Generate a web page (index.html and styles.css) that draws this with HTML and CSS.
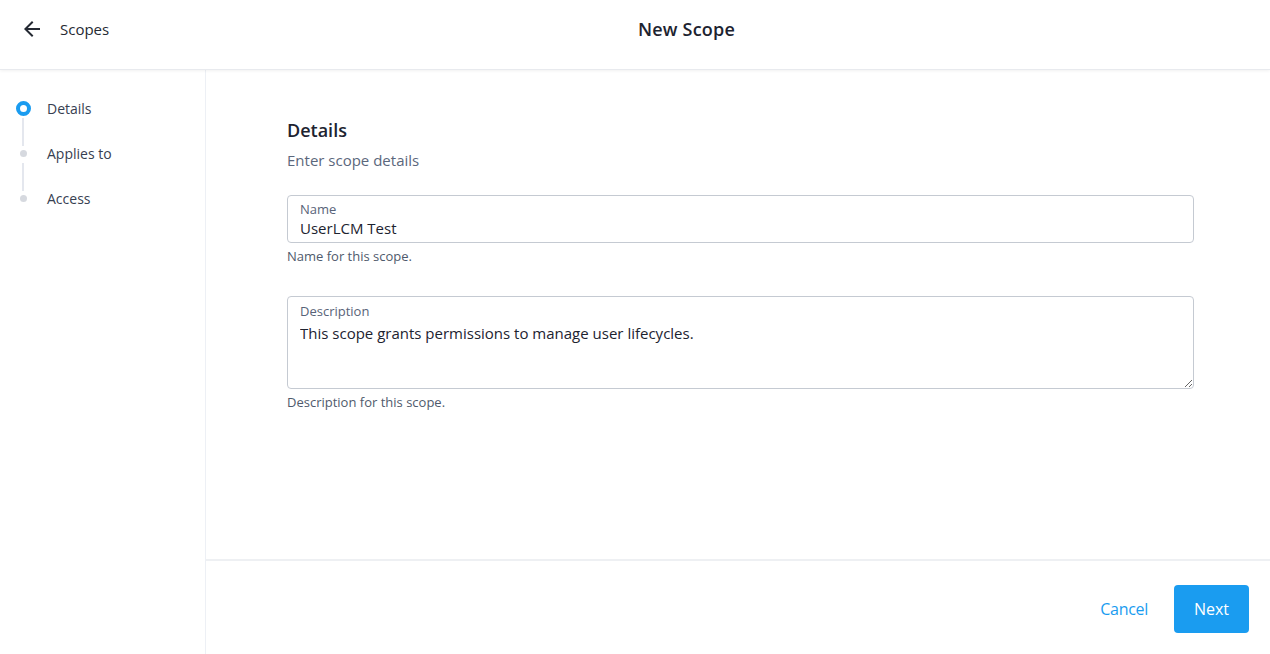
FILE: index.html
```html
<!DOCTYPE html>
<html lang="en">
<head>
  <meta charset="UTF-8" />
  <meta name="viewport" content="width=device-width, initial-scale=1.0"/>
  <title>New Scope</title>
  <link rel="stylesheet" href="styles.css">
</head>
<body>

  <header class="topbar">
    <a class="back" href="#">
      <svg width="24" height="24" viewBox="0 0 24 24"><path d="M20 11H7.83l5.59-5.59L12 4l-8 8 8 8 1.41-1.41L7.83 13H20v-2z" fill="currentColor"/></svg>
      <span>Scopes</span>
    </a>
    <h1 class="title">New Scope</h1>
  </header>

  <div class="layout">
    <!-- wizard steps -->
    <nav class="steps">
      <div class="step active"><span class="marker"></span><span class="step-label">Details</span></div>
      <div class="step"><span class="marker"></span><span class="step-label">Applies to</span></div>
      <div class="step"><span class="marker"></span><span class="step-label">Access</span></div>
    </nav>

    <main class="panel">
      <section class="content">
        <h2>Details</h2>
        <p class="subtitle">Enter scope details</p>

        <div class="field">
          <label for="name">Name</label>
          <input id="name" type="text" value="UserLCM Test" />
        </div>
        <p class="help">Name for this scope.</p>

        <div class="field multi">
          <label for="desc">Description</label>
          <textarea id="desc" rows="2">This scope grants permissions to manage user lifecycles.</textarea>
        </div>
        <p class="help">Description for this scope.</p>
      </section>

      <footer class="actions">
        <button class="btn-link" type="button">Cancel</button>
        <button class="btn-primary" type="button">Next</button>
      </footer>
    </main>
  </div>

</body>
</html>
```

FILE: styles.css
```css
*, *::before, *::after {
  box-sizing: border-box;
}

body {
  font-family: "Open Sans", Arial, sans-serif;
  margin: 0;
  height: 100vh;
  display: flex;
  flex-direction: column;
  background: #fff;
  color: #1d2330;
}

/* top bar */
.topbar {
  height: 70px;
  flex: 0 0 70px;
  display: flex;
  align-items: center;
  padding: 0 20px 12px;
  border-bottom: 1px solid #e8eaee;
  box-shadow: 0 1px 3px rgba(0,0,0,0.06);
  position: relative;
  z-index: 1;
}

.back {
  display: flex;
  align-items: center;
  gap: 16px;
  color: #252a33;
  text-decoration: none;
  font-size: 15px;
  width: 618px;
}

.back svg {
  display: block;
}

.title {
  margin: 0;
  font-size: 18px;
  font-weight: 600;
  letter-spacing: 0.2px;
  color: #1d2330;
}

.layout {
  flex: 1;
  display: flex;
  min-height: 0;
}

/* steps sidebar */
.steps {
  width: 206px;
  flex: 0 0 206px;
  border-right: 1px solid #edf0f5;
  padding-top: 16px;
}

.step {
  display: flex;
  align-items: center;
  gap: 16px;
  height: 45px;
  padding-left: 16px;
  position: relative;
}

.marker {
  width: 15px;
  height: 15px;
  flex: 0 0 15px;
  display: flex;
  align-items: center;
  justify-content: center;
}

.marker::before {
  content: "";
  flex: 0 0 auto;
  width: 7px;
  height: 7px;
  border-radius: 50%;
  background: #d6d9df;
}

.step.active .marker::before {
  width: 15px;
  height: 15px;
  background: #fff;
  border: 4px solid #1a9cf0;
}

.step:not(:last-child)::after {
  content: "";
  position: absolute;
  left: 22px;
  top: 32px;
  width: 2px;
  height: 28px;
  background: #e4e7ee;
}

.step-label {
  font-size: 14px;
  color: #374051;
}

/* main panel */
.panel {
  flex: 1;
  display: flex;
  flex-direction: column;
}

.content {
  flex: 1;
  padding: 48px 76px 0 81px;
}

.content h2 {
  margin: 0;
  font-size: 18px;
  font-weight: 600;
  line-height: 24px;
}

.subtitle {
  margin: 8px 0 25px;
  font-size: 15px;
  line-height: 20px;
  color: #5b677c;
}

.field {
  border: 1px solid #c5cad2;
  border-radius: 4px;
  padding: 4px 12px;
  display: flex;
  flex-direction: column;
}

.field label {
  font-size: 13px;
  line-height: 18px;
  color: #586378;
}

.field input,
.field textarea {
  border: none;
  outline: none;
  padding: 0;
  font-family: inherit;
  font-size: 15px;
  line-height: 20px;
  color: #1d2330;
  background: transparent;
}

.field.multi {
  height: 93px;
  padding-top: 5px;
  resize: vertical;
  overflow: auto;
}

.field.multi textarea {
  margin-top: 3px;
  resize: none;
  flex: 1;
}

.help {
  margin: 4px 0 31px;
  font-size: 13px;
  line-height: 18px;
  color: #4f5a6c;
}

/* footer buttons */
.actions {
  height: 95px;
  flex: 0 0 95px;
  border-top: 2px solid #eef0f3;
  display: flex;
  align-items: center;
  justify-content: flex-end;
  gap: 26px;
  padding: 2px 21px 0 0;
}

.btn-link {
  background: none;
  border: none;
  font-family: inherit;
  font-size: 16px;
  letter-spacing: -0.3px;
  color: #1a9cf0;
  cursor: pointer;
  padding: 0;
}

.btn-primary {
  background: #1a9cf0;
  color: #fff;
  border: none;
  border-radius: 4px;
  font-family: inherit;
  font-size: 16px;
  width: 75px;
  height: 48px;
  cursor: pointer;
}
```
